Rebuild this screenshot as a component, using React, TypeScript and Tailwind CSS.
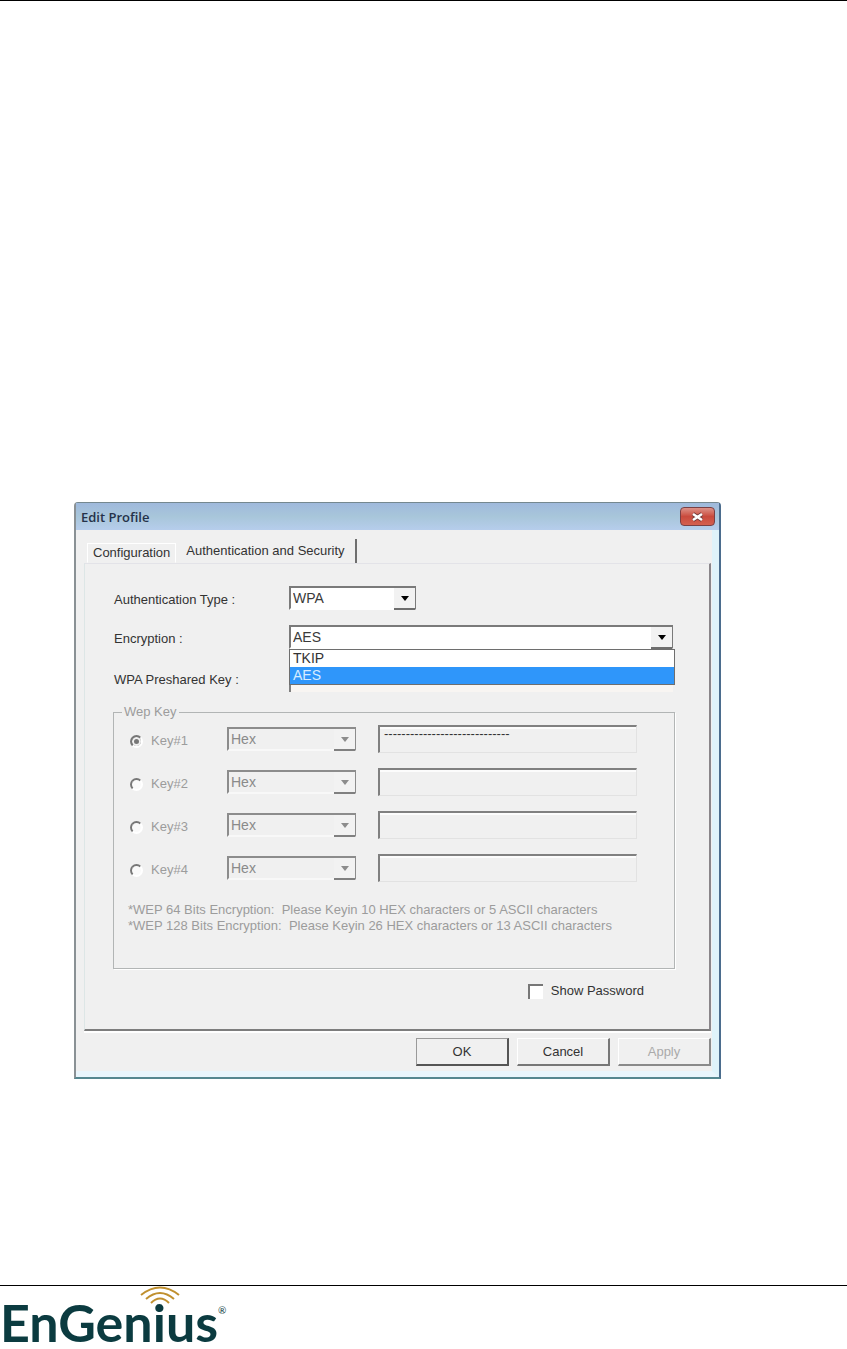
import { useState } from "react";
import type { ReactNode } from "react";

const KEYS = [
  { id: 1, value: "-----------------------------" },
  { id: 2, value: "" },
  { id: 3, value: "" },
  { id: 4, value: "" },
];

const SUNKEN = "border-t-2 border-l-2 border-[#808080] outline-none";

type DropdownProps = {
  id: string;
  value: string;
  options: string[];
  onChange?: (value: string) => void;
  disabled?: boolean;
  label?: string;
};

function Dropdown({ id, value, options, onChange, disabled, label }: DropdownProps) {
  return (
    <div
      className={`relative h-6 w-full border-2 ${
        disabled
          ? "border-[#8c8c8c] border-b-[#f8f8f8] bg-[#f0f0f0]"
          : "border-[#7a7a7a] border-b-white bg-white"
      }`}
    >
      <select
        id={id}
        aria-label={label}
        value={value}
        disabled={disabled}
        onChange={(e) => onChange?.(e.target.value)}
        className={`block h-5 w-full appearance-none bg-transparent pr-5 pl-0.5 text-sm leading-5 opacity-100 outline-none ${
          disabled ? "text-[#8a8a8a]" : "text-[#3a3a3a]"
        }`}
      >
        {options.map((o) => (
          <option key={o}>{o}</option>
        ))}
      </select>
      <span
        className={`pointer-events-none absolute top-0 -right-px flex h-[22px] w-[21px] items-center justify-center border-b-2 bg-[#f2f2f2] ${
          disabled ? "border-[#808080] text-[#8c8c8c]" : "border-[#6e6e6e] text-black"
        }`}
      >
        <svg width="8" height="5" viewBox="0 0 8 5" fill="currentColor" aria-hidden="true">
          <path d="M0 0h8L4 5z" />
        </svg>
      </span>
    </div>
  );
}

function FormRow({ id, label, children }: { id: string; label: string; children: ReactNode }) {
  return (
    <div className="grid grid-cols-[175px_1fr] items-center">
      <label htmlFor={id} className="pt-1">
        {label}
      </label>
      {children}
    </div>
  );
}

function EditProfileDialog() {
  const [authType, setAuthType] = useState("WPA");
  const [encryption, setEncryption] = useState("AES");
  const [showPassword, setShowPassword] = useState(false);

  return (
    <section
      aria-label="Edit Profile"
      className="rounded-t border-2 border-t border-t-[#75888f] border-r-[#4b6c8d] border-b-[#568790] border-l-[#8a9195] bg-[#f0f0f0] text-[13px] leading-4 text-[#333]"
    >
      <header className="flex h-[27px] items-center justify-between bg-linear-to-b from-[#9fb9dc] via-[#a8c6da] to-[#b6cdec] pr-1 pl-[5px]">
        <h1 className="font-['Open_Sans',sans-serif] text-[13px] leading-4 font-semibold text-[#25324a]">
          Edit Profile
        </h1>
        <button
          type="button"
          aria-label="Close"
          className="flex h-[19px] w-[35px] items-center justify-center rounded border border-[#7a4044] bg-linear-to-b from-[#dc9188] via-[#c94a3d] to-[#d4604f]"
        >
          <svg width="13" height="10" viewBox="0 0 13 10" aria-hidden="true">
            <path d="M2 2l9 6M11 2l-9 6" stroke="#6d3a3a" strokeWidth="4" />
            <path d="M2 2l9 6M11 2l-9 6" stroke="#fff" strokeWidth="2.6" />
          </svg>
        </button>
      </header>

      <div className="border-r-[7px] border-b-[6px] border-r-[#dff3fa] border-b-[#e9f5fc] pt-[9px] pr-px pb-[5px] pl-2">
        <div role="tablist" className="flex h-6 items-start pl-[3px]">
          <button
            type="button"
            role="tab"
            aria-selected="false"
            className="mt-1 h-5 border border-white border-b-transparent px-[5px]"
          >
            Configuration
          </button>
          <button
            type="button"
            role="tab"
            aria-selected="true"
            className="h-6 border-r-2 border-[#6f6f6f] px-[10px]"
          >
            Authentication and Security
          </button>
        </div>

        <div
          role="tabpanel"
          className="border border-r-2 border-b-2 border-t-[#e3e3e8] border-r-[#8a868a] border-b-[#7d7d7d] border-l-[#dde6e6] pt-[22px] pr-[34px] pb-[30px] pl-7"
        >
          <div className="flex flex-col gap-[15px] pr-0.5 pl-px">
            <FormRow id="auth-type" label="Authentication Type :">
              <div className="w-[127px]">
                <Dropdown
                  id="auth-type"
                  value={authType}
                  options={["WPA", "WPA2"]}
                  onChange={setAuthType}
                />
              </div>
            </FormRow>
            <FormRow id="encryption" label="Encryption :">
              <div className="relative">
                <Dropdown
                  id="encryption"
                  value={encryption}
                  options={["TKIP", "AES"]}
                  onChange={setEncryption}
                />
                <ul
                  role="listbox"
                  aria-label="Encryption options"
                  className="absolute top-full -right-0.5 left-0 border border-[#6e6e6e] bg-white text-sm leading-4"
                >
                  {["TKIP", "AES"].map((o) => (
                    <li
                      key={o}
                      role="option"
                      aria-selected={o === encryption}
                      onClick={() => setEncryption(o)}
                      className={`h-[17px] pl-[3px] ${
                        o === encryption ? "bg-[#2f96fa] text-[#d6ecff]" : ""
                      }`}
                    >
                      {o}
                    </li>
                  ))}
                </ul>
              </div>
            </FormRow>
            <FormRow id="preshared" label="WPA Preshared Key :">
              <input
                id="preshared"
                type={showPassword ? "text" : "password"}
                className={`h-7 w-full bg-[#f8f5f2] px-1 ${SUNKEN}`}
              />
            </FormRow>
          </div>

          <fieldset className="mt-3 border border-[#b2b5b5] pt-[5px] pb-[34px] pl-3 text-[#9c9c9c] shadow-[1px_1px_0_#fff]">
            <legend className="-ml-1 px-0.5">Wep Key</legend>
            <div className="flex flex-col gap-[15px]">
              {KEYS.map((k) => (
                <div key={k.id} className="flex h-7 items-center pr-[37px] pl-1">
                  <label className="flex w-[97px] items-center gap-2 pt-1">
                    <input
                      type="radio"
                      name="wep-key"
                      disabled
                      defaultChecked={k.id === 1}
                      className="size-[13px] appearance-none rounded-full border-2 border-[#777] border-r-white border-b-white bg-[#fafafa] checked:bg-[#777] checked:shadow-[inset_0_0_0_2px_#f0f0f0]"
                    />
                    Key#{k.id}
                  </label>
                  <div className="mr-[22px] w-[129px] shrink-0">
                    <Dropdown
                      id={`key-format-${k.id}`}
                      label={`Key#${k.id} format`}
                      value="Hex"
                      options={["Hex", "ASCII"]}
                      disabled
                    />
                  </div>
                  <input
                    type="text"
                    aria-label={`Key#${k.id} value`}
                    value={k.value}
                    disabled
                    readOnly
                    className={`h-7 min-w-0 flex-1 border-r border-b border-r-[#e2e2e2] border-b-[#e2e2e2] bg-[#f0f0f0] pb-3 pl-1 text-[#333] shadow-[inset_0_2px_0_#fcfcfc] ${SUNKEN}`}
                  />
                </div>
              ))}
            </div>
            <p className="mt-5 pl-0.5">
              *WEP 64 Bits Encryption:&nbsp; Please Keyin 10 HEX characters or 5 ASCII characters
            </p>
            <p className="pl-0.5">
              *WEP 128 Bits Encryption:&nbsp; Please Keyin 26 HEX characters or 13 ASCII characters
            </p>
          </fieldset>

          <div className="mt-[14px] flex justify-end pr-[31px]">
            <label className="flex items-center gap-2">
              <input
                type="checkbox"
                checked={showPassword}
                onChange={(e) => setShowPassword(e.target.checked)}
                className="size-[15px] appearance-none border-t-2 border-l-2 border-[#777] bg-white checked:bg-[#777]"
              />
              Show Password
            </label>
          </div>
        </div>

        <div className="flex justify-end gap-2 border-t-2 border-white pt-[5px]">
          <button
            type="button"
            className="h-7 w-[93px] border border-r-2 border-b-2 border-[#9a9a9a] border-r-[#555] border-b-[#555]"
          >
            OK
          </button>
          <button
            type="button"
            className="h-7 w-[93px] border border-r-2 border-b-2 border-white border-r-[#777] border-b-[#777]"
          >
            Cancel
          </button>
          <button
            type="button"
            disabled
            className="h-7 w-[93px] border border-r-2 border-b-2 border-white border-r-[#8a8a8a] border-b-[#8a8a8a] text-[#aaa]"
          >
            Apply
          </button>
        </div>
      </div>
    </section>
  );
}

function Logo() {
  return (
    <div className="relative flex items-start font-['Lato',sans-serif] text-[#0b3b40]">
      <span className="pt-2 text-[52px] leading-[56px] font-bold whitespace-nowrap">
        EnGenius
      </span>
      <span className="pt-4 text-[10px] leading-4">®</span>
      <svg
        className="absolute top-0 left-[140px]"
        width="40"
        height="20"
        viewBox="0 0 40 20"
        fill="none"
        stroke="#c0902f"
        strokeWidth="2"
        aria-hidden="true"
      >
        <path d="M1 9Q20-6 39 9" />
        <path d="M6 13Q20 1 34 13" />
        <path d="M11 17Q20 8 29 17" />
      </svg>
    </div>
  );
}

export default function App() {
  return (
    <div className="flex min-h-screen flex-col border-t border-black bg-white font-['Liberation_Sans',Arial,sans-serif]">
      <main className="pt-[501px] pr-[126px] pb-20 pl-[74px]">
        <EditProfileDialog />
      </main>
      <footer className="mt-auto h-16 border-t border-black">
        <Logo />
      </footer>
    </div>
  );
}
